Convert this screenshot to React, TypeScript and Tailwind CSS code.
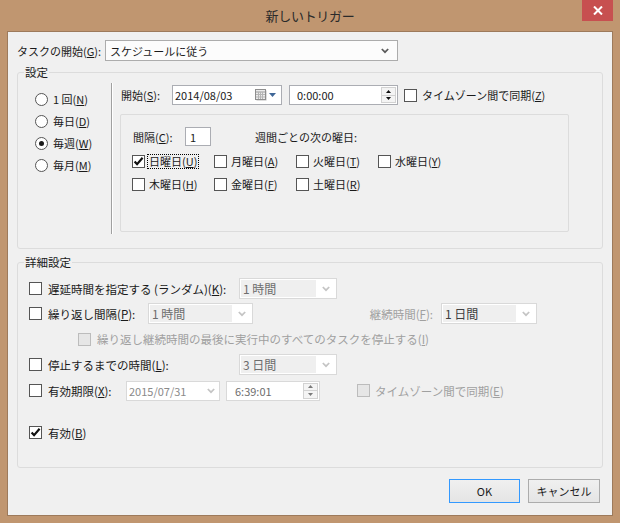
import React from "react";

function U({ c }: { c: string }) {
  return <span className="underline underline-offset-[1px] decoration-[1px]">{c}</span>;
}

function Chevron({ light }: { light?: boolean }) {
  return (
    <svg width="8" height="6" viewBox="0 0 8 6" className="shrink-0">
      <polyline
        points="0.8,1 4,4.2 7.2,1"
        fill="none"
        stroke={light ? "#c4c4c4" : "#5a5a5a"}
        strokeWidth="1.7"
      />
    </svg>
  );
}

function Check({ checked, disabled }: { checked?: boolean; disabled?: boolean }) {
  return (
    <span
      className={
        disabled
          ? "w-[13px] h-[13px] shrink-0 border border-[#bcbcbc] bg-[#e6e6e6] flex items-center justify-center"
          : "w-[13px] h-[13px] shrink-0 border border-[#555555] bg-white flex items-center justify-center"
      }
    >
      {checked && (
        <svg width="11" height="11" viewBox="0 0 11 11">
          <polyline points="1.6,5.4 4.1,8.2 9.6,1.8" fill="none" stroke="#111" strokeWidth="2.2" />
        </svg>
      )}
    </span>
  );
}

function Radio({ checked }: { checked?: boolean }) {
  return (
    <span className="w-[13px] h-[13px] shrink-0 rounded-full border border-[#555555] bg-white flex items-center justify-center">
      {checked && <span className="w-[5px] h-[5px] rounded-full bg-[#1a1a1a]" />}
    </span>
  );
}

function Spinner({ disabled }: { disabled?: boolean }) {
  const c = disabled ? "#7a7a7a" : "#111";
  return (
    <div className="w-[15px] h-[16px] flex flex-col gap-[0px] shrink-0">
      <div className="flex-1 border border-[#d2d2d2] bg-[#f4f4f4] flex items-center justify-center">
        <svg width="5" height="3" viewBox="0 0 5 3">
          <polygon points="2.5,0 5,3 0,3" fill={c} />
        </svg>
      </div>
      <div className="flex-1 border border-[#d2d2d2] border-t-0 bg-[#f4f4f4] flex items-center justify-center">
        <svg width="5" height="3" viewBox="0 0 5 3">
          <polygon points="0,0 5,0 2.5,3" fill={c} />
        </svg>
      </div>
    </div>
  );
}

function CalendarIcon() {
  return (
    <div className="flex items-center gap-[2px] shrink-0">
      <svg width="12" height="12" viewBox="0 0 12 12">
        <rect x="1.5" y="1.5" width="10" height="10" fill="#bdbdbd" />
        <rect x="0.5" y="0.5" width="10" height="10" fill="#ececec" stroke="#8e8e8e" />
        <line x1="1" y1="3" x2="10" y2="3" stroke="#9a9a9a" />
        <line x1="1" y1="5.5" x2="10" y2="5.5" stroke="#b5b5b5" />
        <line x1="1" y1="8" x2="10" y2="8" stroke="#b5b5b5" />
        <line x1="3.5" y1="3" x2="3.5" y2="10" stroke="#b5b5b5" />
        <line x1="5.5" y1="3" x2="5.5" y2="10" stroke="#b5b5b5" />
        <line x1="7.5" y1="3" x2="7.5" y2="10" stroke="#b5b5b5" />
      </svg>
      <svg width="7" height="4" viewBox="0 0 7 4">
        <polygon points="0,0 7,0 3.5,4" fill="#3f6697" />
      </svg>
    </div>
  );
}

function DisSelect({ text, dark, className }: { text: string; dark?: boolean; className: string }) {
  return (
    <div className={"h-[21px] border border-[#d9d9d9] bg-white p-[1px] flex shrink-0 " + className}>
      <div
        className={
          dark
            ? "flex-1 bg-[#efefef] flex items-center pl-[2px] text-[#404040] text-[12px]"
            : "flex-1 bg-[#efefef] flex items-center pl-[2px] text-[#6d6d6d] text-[12px]"
        }
      >
        {text}
      </div>
      <div className="w-[19px] flex items-center justify-center">
        <Chevron light />
      </div>
    </div>
  );
}

const days1: [string, string][] = [
  ["日曜日", "U"],
  ["月曜日", "A"],
  ["火曜日", "T"],
  ["水曜日", "Y"],
];
const days2: [string, string][] = [
  ["木曜日", "H"],
  ["金曜日", "F"],
  ["土曜日", "R"],
];

export default function App() {
  return (
    <div className="w-[620px] h-[523px] bg-[#c09670] flex flex-col relative select-none font-['Noto_Sans_CJK_JP',sans-serif]">
      {/* Title bar */}
      <div className="h-[31px] shrink-0 flex items-center justify-center text-[13px] text-[#2a2a2a] tracking-[-0.3px]">
        新しいトリガー
      </div>
      <div className="absolute top-0 right-[7px] w-[31px] h-[21px] bg-[#c75050] flex items-center justify-center">
        <svg width="10" height="9" viewBox="0 0 10 9">
          <line x1="1" y1="0.5" x2="9" y2="8.5" stroke="#fff" strokeWidth="2" />
          <line x1="9" y1="0.5" x2="1" y2="8.5" stroke="#fff" strokeWidth="2" />
        </svg>
      </div>

      {/* Client area */}
      <div className="mx-[7px] mb-[7px] flex-1 border border-[#9d7a5b] bg-[#f0f0f0] flex flex-col text-[11px] leading-[16px] text-[#1a1a1a]">
        {/* Task start */}
        <div className="mt-[8px] ml-[9px] flex items-center">
          <span className="w-[88px]">
            タスクの開始(<U c="G" />):
          </span>
          <div className="w-[293px] h-[21px] border border-[#acacac] bg-[#fcfcfc] flex items-center justify-between pl-[4px] pr-[8px]">
            <span>スケジュールに従う</span>
            <Chevron />
          </div>
        </div>

        {/* Settings */}
        <fieldset className="mt-[3px] mx-[9px] border border-[#dcdcdc] rounded-[3px] pb-[14px]">
          <legend className="ml-[6px] px-[1px] leading-[16px] text-[11.5px]">設定</legend>
          <div className="flex">
            <div className="w-[93px] pl-[17px] pt-[8px] flex flex-col shrink-0">
              {[
                ["1 回", "N", false],
                ["毎日", "D", false],
                ["毎週", "W", true],
                ["毎月", "M", false],
              ].map(([t, k, c]) => (
                <div key={k as string} className="h-[22px] flex items-center">
                  <Radio checked={c as boolean} />
                  <span className="ml-[5px]">
                    {t as string}(<U c={k as string} />)
                  </span>
                </div>
              ))}
            </div>
            <div className="mt-[3px] h-[151px] w-[2px] border-l border-l-[#a0a0a0] border-r border-r-white shrink-0" />
            <div className="pl-[7px] flex flex-col">
              <div className="mt-[5px] h-[20px] flex items-center">
                <span className="ml-[1px] w-[51px]">
                  開始(<U c="S" />):
                </span>
                <div className="w-[110px] h-[20px] border border-[#abadb3] bg-white flex items-center justify-between pl-[2px] pr-[5px]">
                  <span>2014/08/03</span>
                  <CalendarIcon />
                </div>
                <div className="ml-[7px] w-[109px] h-[20px] border border-[#abadb3] bg-white flex items-center justify-between pl-[7px] pr-[1px]">
                  <span>0:00:00</span>
                  <Spinner />
                </div>
                <span className="ml-[6px]">
                  <Check />
                </span>
                <span className="ml-[5px]">
                  タイムゾーン間で同期(<U c="Z" />)
                </span>
              </div>
              <div className="mt-[9px] w-[449px] h-[118px] border border-[#dcdcdc] rounded-[2px] flex flex-col">
                <div className="mt-[12px] pl-[12px] flex items-center">
                  <span className="w-[52px]">
                    間隔(<U c="C" />):
                  </span>
                  <div className="w-[26px] h-[19px] border border-[#abadb3] bg-white flex items-center pl-[4px]">1</div>
                  <span className="ml-[44px]">週間ごとの次の曜日:</span>
                </div>
                <div className="mt-[4px] pl-[11px] grid grid-cols-[82px_82px_82px_82px]">
                  {days1.map(([t, k], i) => (
                    <div key={k} className="h-[23px] flex items-center">
                      <Check checked={i === 0} />
                      <span
                        className={
                          i === 0
                            ? "ml-[2px] px-[1px] leading-[13px] border border-dotted border-black"
                            : "ml-[2px] px-[1px] leading-[13px] border border-transparent"
                        }
                      >
                        {t}(<U c={k} />)
                      </span>
                    </div>
                  ))}
                  {days2.map(([t, k]) => (
                    <div key={k} className="h-[23px] flex items-center">
                      <Check />
                      <span className="ml-[2px] px-[1px] leading-[13px] border border-transparent">
                        {t}(<U c={k} />)
                      </span>
                    </div>
                  ))}
                </div>
              </div>
            </div>
          </div>
        </fieldset>

        {/* Advanced */}
        <fieldset className="mt-[5px] mx-[9px] border border-[#dcdcdc] rounded-[3px] pt-[6px] pb-[22px] pl-[11px] text-[11.5px]">
          <legend className="ml-[-5px] px-[1px] leading-[16px] text-[11.5px]">詳細設定</legend>
          <div className="h-[25px] flex items-center">
            <Check />
            <span className="ml-[6px] w-[191px]">
              遅延時間を指定する (ランダム)(<U c="K" />):
            </span>
            <DisSelect text="1 時間" className="w-[98px]" />
          </div>
          <div className="h-[25px] flex items-center">
            <Check />
            <span className="ml-[6px] w-[100px]">
              繰り返し間隔(<U c="P" />):
            </span>
            <DisSelect text="1 時間" className="w-[105px]" />
            <span className="w-[188px] text-right pr-[8px] text-[#a0a0a0]">
              継続時間(<U c="F" />):
            </span>
            <DisSelect text="1 日間" dark className="w-[96px]" />
          </div>
          <div className="h-[26px] flex items-center">
            <span className="ml-[49px]">
              <Check disabled />
            </span>
            <span className="ml-[6px] text-[#a0a0a0]">
              繰り返し継続時間の最後に実行中のすべてのタスクを停止する(<U c="I" />)
            </span>
          </div>
          <div className="h-[25px] flex items-center">
            <Check />
            <span className="ml-[6px] w-[191px]">
              停止するまでの時間(<U c="L" />):
            </span>
            <DisSelect text="3 日間" className="w-[98px]" />
          </div>
          <div className="h-[27px] flex items-center">
            <Check />
            <span className="ml-[6px] w-[78px]">
              有効期限(<U c="X" />):
            </span>
            <div className="w-[94px] h-[20px] border border-[#d9d9d9] bg-white flex items-center justify-between pl-[2px] pr-[4px] text-[#8a8a8a] text-[11px]">
              <span>2015/07/31</span>
              <Chevron light />
            </div>
            <div className="ml-[6px] w-[94px] h-[20px] border border-[#d9d9d9] bg-white flex items-center justify-between pl-[8px] pr-[1px] text-[#6d6d6d] text-[11px]">
              <span>6:39:01</span>
              <Spinner disabled />
            </div>
            <span className="ml-[37px]">
              <Check disabled />
            </span>
            <span className="ml-[5px] text-[#a0a0a0]">
              タイムゾーン間で同期(<U c="E" />)
            </span>
          </div>
          <div className="mt-[16px] h-[25px] flex items-center">
            <Check checked />
            <span className="ml-[6px]">
              有効(<U c="B" />)
            </span>
          </div>
        </fieldset>

        {/* Buttons */}
        <div className="mt-[11px] flex justify-end gap-[8px] pr-[12px]">
          <div className="w-[71px] h-[24px] border border-[#3399ff] bg-linear-to-b from-[#f0f0f0] to-[#e5e5e5] flex items-center justify-center">
            OK
          </div>
          <div className="w-[72px] h-[24px] border border-[#acacac] bg-linear-to-b from-[#f0f0f0] to-[#e5e5e5] flex items-center justify-center">
            キャンセル
          </div>
        </div>
      </div>
    </div>
  );
}
